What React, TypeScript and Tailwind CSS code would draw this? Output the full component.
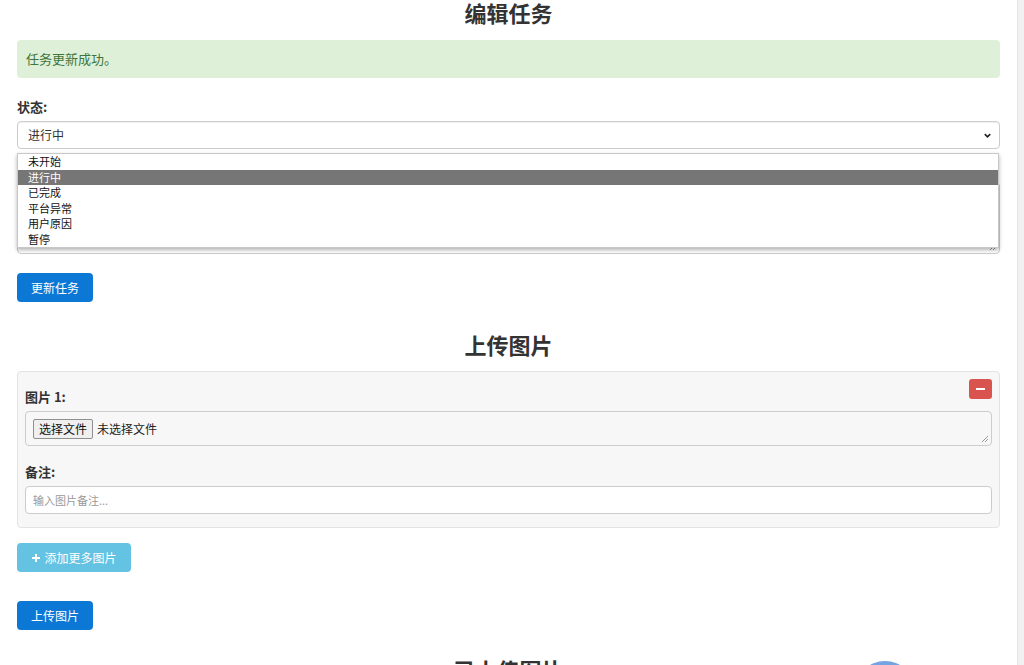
const statusOptions = ["未开始", "进行中", "已完成", "平台异常", "用户原因", "暂停"];

const ResizeGrip = () => (
  <svg width="8" height="8" viewBox="0 0 8 8" className="absolute right-[2px] bottom-[2px]">
    <path d="M7 1 L1 7 M7 4 L4 7" stroke="#999" strokeWidth="1" />
  </svg>
);

const App = () => {
  return (
    <div
      className="flex w-[1024px] h-[665px] overflow-hidden bg-white text-[#333]"
      style={{ fontFamily: '"Noto Sans CJK SC", "Noto Sans", sans-serif' }}
    >
      <div className="relative self-start w-[1017px] px-[17px] flex flex-col">
        {/* edit form */}
        <h2 className="text-[22px] font-bold leading-[24px] text-center text-[#333] mt-0 mb-[16px]">
          编辑任务
        </h2>
        <div className="h-[38px] rounded-[4px] bg-[#dff0d8] text-[#3c763d] text-[13px] leading-[38px] px-[9px]">
          任务更新成功。
        </div>

        <label className="mt-[20px] text-[13px] font-bold leading-[18px]">状态:</label>
        <div className="relative mt-[5px]">
          <div className="h-[28px] flex items-center justify-between rounded-[4px] border border-[#ccc] bg-white pl-[10px] pr-[7px] text-[12px] shadow-[inset_0_1px_1px_rgba(0,0,0,0.06)]">
            <span>进行中</span>
            <svg width="9" height="9" viewBox="0 0 10 10">
              <path d="M2 3.5 L5 6.5 L8 3.5" fill="none" stroke="#222" strokeWidth="1.8" />
            </svg>
          </div>
          {/* open option list */}
          <ul className="absolute left-0 right-[1px] top-[32px] z-10 bg-white border border-[#c8c8c8] shadow-[0_2px_4px_rgba(0,0,0,0.3)] text-[11px] leading-[15.5px] text-[#111]">
            {statusOptions.map((o) => (
              <li
                key={o}
                className={o === "进行中" ? "px-[10px] bg-[#767676] text-white" : "px-[10px]"}
              >
                {o}
              </li>
            ))}
          </ul>
        </div>

        <label className="mt-[10px] text-[13px] font-bold leading-[18px]">备注:</label>
        <div className="relative mt-[5px] h-[72px] rounded-[4px] border border-[#ccc] bg-white">
          <ResizeGrip />
        </div>

        <div className="mt-[19px]">
          <button className="h-[29px] w-[76px] rounded-[4px] bg-[#0b78d6] text-white text-[12px]">
            更新任务
          </button>
        </div>

        {/* upload section */}
        <h2 className="mt-[30px] text-[22px] font-bold leading-[24px] text-center text-[#333]">
          上传图片
        </h2>
        <div className="relative mt-[15px] rounded-[4px] border border-[#e3e3e3] bg-[#f7f7f7] px-[7px] pt-[16px] pb-[13px] flex flex-col">
          <button className="absolute right-[7px] top-[7px] w-[23px] h-[20px] rounded-[3px] bg-[#d9534f] flex items-center justify-center">
            <span className="block w-[9px] h-[2px] bg-white" />
          </button>
          <label className="text-[13px] font-bold leading-[18px]">图片 1:</label>
          <div className="relative mt-[5px] h-[35px] rounded-[4px] border border-[#ccc] bg-[#f7f7f7] flex items-center px-[7px] gap-[4px]">
            <span className="h-[20px] px-[5px] border border-[#8f8f8f] rounded-[2px] bg-[#efefef] text-[12px] leading-[18px] text-[#111]">
              选择文件
            </span>
            <span className="text-[12px] text-[#222]">未选择文件</span>
            <ResizeGrip />
          </div>
          <label className="mt-[17px] text-[13px] font-bold leading-[18px]">备注:</label>
          <input
            className="mt-[5px] h-[28px] rounded-[4px] border border-[#ccc] bg-white px-[7px] text-[11px] placeholder:text-[#999] outline-none"
            placeholder="输入图片备注..."
          />
        </div>

        <div className="mt-[15px]">
          <button className="h-[29px] w-[114px] rounded-[4px] bg-[#64c2e2] text-white text-[12px] flex items-center justify-center gap-[3px]">
            <svg width="10" height="10" viewBox="0 0 10 10">
              <path d="M5 1 V9 M1 5 H9" stroke="white" strokeWidth="2" />
            </svg>
            添加更多图片
          </button>
        </div>
        <div className="mt-[29px]">
          <button className="h-[29px] w-[76px] rounded-[4px] bg-[#0b78d6] text-white text-[12px]">
            上传图片
          </button>
        </div>

        <h2 className="mt-[27px] text-[22px] font-bold leading-[24px] text-center text-[#333]">
          已上传图片
        </h2>

        {/* thumbnail peeking in at the bottom */}
        <div className="absolute left-[855px] top-[661px] w-[60px] h-[60px] rounded-full bg-[#76a4e2]" />
      </div>
      <div className="w-[7px] bg-[#f1f1f1] border-l border-[#e4e4e4]" />
    </div>
  );
};

export default App;
